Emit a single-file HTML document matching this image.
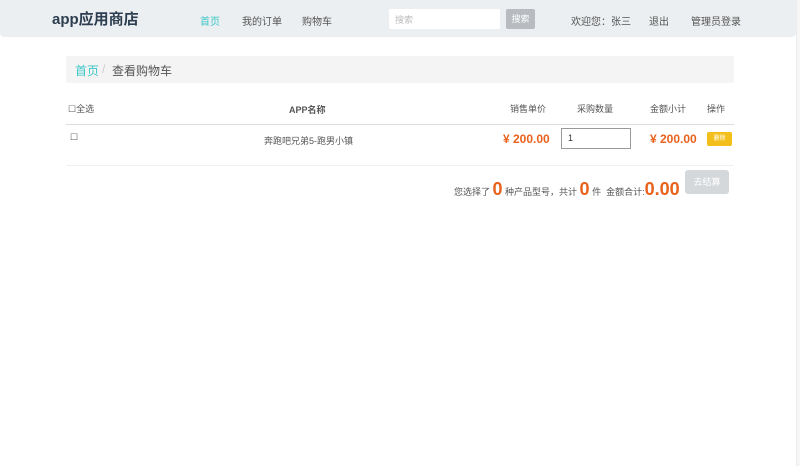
<!DOCTYPE html>
<html><head><meta charset="utf-8"><style>
*{margin:0;padding:0;box-sizing:border-box}
body{width:800px;height:466px;background:#fff;font-family:"Liberation Sans","Noto Sans CJK SC",sans-serif;color:#555;position:relative;overflow:hidden;font-size:10px}
.nav{position:absolute;left:0;top:0;width:796px;height:37px;background:#eceff1;border-radius:0 0 4px 4px}
.abs{position:absolute;white-space:nowrap}
.edge{position:absolute;right:0;top:0;width:4px;height:466px;background:#f6f6f6;border-left:1px solid #ececec}
</style></head><body>
<div class="nav">
<div class="abs" style="left:52px;top:8px;font-size:15px;font-weight:bold;color:#2c3e50">app应用商店</div>
<div class="abs" style="left:200px;top:13px;color:#3cc6c6">首页</div>
<div class="abs" style="left:242px;top:13px;color:#555">我的订单</div>
<div class="abs" style="left:302px;top:13px;color:#555">购物车</div>
<div class="abs" style="left:389px;top:9px;width:111px;height:20px;background:#fff;border-radius:2px;padding:4px 6px;color:#bbb;font-size:9px">搜索</div>
<div class="abs" style="left:506px;top:9px;width:29px;height:20px;background:#b8bcc0;border-radius:2px;color:#fff;text-align:center;line-height:20px;font-size:9px">搜索</div>
<div class="abs" style="left:571px;top:13px">欢迎您：张三</div>
<div class="abs" style="left:649px;top:13px">退出</div>
<div class="abs" style="left:691px;top:13px">管理员登录</div>
</div>
<div class="abs" style="left:66px;top:56px;width:668px;height:27px;background:#f4f4f4;border-radius:2px"></div>
<div class="abs" style="left:75px;top:62px;font-size:12px;color:#3cc6c6">首页</div>
<div class="abs" style="left:102px;top:62px;font-size:12px;color:#ccc">/</div>
<div class="abs" style="left:112px;top:62px;font-size:12px;color:#555">查看购物车</div>
<div class="abs" style="left:68px;top:102px;font-size:9px">☐全选</div>
<div class="abs" style="left:289px;top:103px;font-size:9px;font-weight:bold">APP名称</div>
<div class="abs" style="left:510px;top:102px;font-size:9px">销售单价</div>
<div class="abs" style="left:577px;top:102px;font-size:9px">采购数量</div>
<div class="abs" style="left:650px;top:102px;font-size:9px">金额小计</div>
<div class="abs" style="left:707px;top:102px;font-size:9px">操作</div>
<div class="abs" style="left:66px;top:124px;width:668px;height:1px;background:#ddd"></div>
<div class="abs" style="left:70px;top:132px;font-size:9px">☐</div>
<div class="abs" style="left:264px;top:134px;font-size:9px">奔跑吧兄弟5-跑男小镇</div>
<div class="abs" style="left:503px;top:132px;font-size:12px;font-weight:bold;color:#e8621c">¥ 200.00</div>
<div class="abs" style="left:561px;top:128px;width:70px;height:21px;border:1px solid #999;padding:4px 6px;font-size:9px;color:#333">1</div>
<div class="abs" style="left:650px;top:132px;font-size:12px;font-weight:bold;color:#e8621c">¥ 200.00</div>
<div class="abs" style="left:707px;top:132px;width:25px;height:14px;background:#f3c01b;border-radius:2px;color:#fff;font-size:6px;text-align:center;line-height:14px">删除</div>
<div class="abs" style="left:66px;top:165px;width:668px;height:1px;background:#f0f0f0"></div>
<div class="abs" style="left:685px;top:170px;width:44px;height:24px;background:#d5d8db;border-radius:3px;color:#fff;font-size:9px;text-align:center;line-height:24px">去结算</div>
<div class="abs" style="left:454px;top:178px;font-size:9px;line-height:22px">您选择了 <b style="font-size:18px;color:#e8621c">0</b> 种产品型号，共计 <b style="font-size:18px;color:#e8621c">0</b> 件&nbsp; 金额合计:<b style="font-size:18px;color:#e8621c">0.00</b></div>
<div class="edge"></div>
</body></html>
